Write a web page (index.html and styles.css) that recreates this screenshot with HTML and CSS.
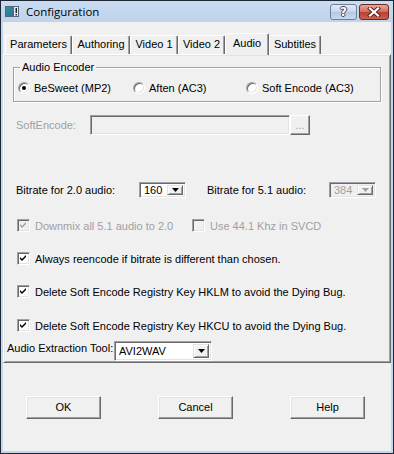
FILE: index.html
```html
<!DOCTYPE html>
<html>
<head>
  <meta charset="UTF-8">
  <title>Configuration</title>
  <link rel="stylesheet" href="styles.css">
</head>
<body>
<div class="window">
  <div class="titlebar">
    <svg class="app-icon" width="14" height="11" viewBox="0 0 14 11">
      <defs>
        <linearGradient id="ig" x1="0" y1="0" x2="1" y2="1">
          <stop offset="0" stop-color="#2f9a86"/>
          <stop offset="1" stop-color="#3565a8"/>
        </linearGradient>
      </defs>
      <rect x="0.5" y="0.5" width="13" height="10" fill="#e8eef5" stroke="#55657a"/>
      <rect x="1" y="1" width="8" height="9" fill="url(#ig)"/>
      <rect x="10.5" y="2" width="1.5" height="5" fill="#222"/>
      <rect x="10.5" y="8" width="1.5" height="1.5" fill="#222"/>
    </svg>
    <span class="title">Configuration</span>
    <div class="caption-btns">
      <span class="cap-btn cap-help">?</span>
      <span class="cap-btn cap-close">
        <svg width="14" height="10" viewBox="0 0 14 10">
          <path d="M3 1.5 L11 8.5 M11 1.5 L3 8.5" stroke="#5b1a12" stroke-width="4" stroke-linecap="square"/>
          <path d="M3 1.5 L11 8.5 M11 1.5 L3 8.5" stroke="#fff" stroke-width="2.2" stroke-linecap="square"/>
        </svg>
      </span>
    </div>
  </div>

  <div class="client">
    <div class="tabs">
      <div class="tab tab-params">Parameters</div>
      <div class="tab tab-author">Authoring</div>
      <div class="tab tab-video1">Video 1</div>
      <div class="tab tab-video2">Video 2</div>
      <div class="tab tab-audio selected">Audio</div>
      <div class="tab tab-subs">Subtitles</div>
    </div>

    <div class="panel">
      <div class="group">
        <span class="legend">Audio Encoder</span>
        <div class="radio-row">
          <label class="radio radio-1"><span class="radio-box on"></span>BeSweet (MP2)</label>
          <label class="radio radio-2"><span class="radio-box"></span>Aften (AC3)</label>
          <label class="radio"><span class="radio-box"></span>Soft Encode (AC3)</label>
        </div>
      </div>

      <div class="row row-soft">
        <span class="lbl lbl-soft disabled">SoftEncode:</span>
        <span class="textbox"></span>
        <span class="browse">...</span>
      </div>

      <div class="row row-bitrate">
        <span class="lbl lbl-br1">Bitrate for 2.0 audio:</span>
        <span class="combo combo-small"><span class="combo-text">160</span><span class="combo-arrow"><svg width="7" height="4" viewBox="0 0 7 4"><polygon points="0,0 7,0 3.5,4" fill="#000"/></svg></span></span>
        <span class="lbl lbl-br2">Bitrate for 5.1 audio:</span>
        <span class="combo combo-small combo-off"><span class="combo-text">384</span><span class="combo-arrow"><svg width="7" height="4" viewBox="0 0 7 4"><polygon points="0,0 7,0 3.5,4" fill="#a0a0a0"/></svg></span></span>
      </div>

      <div class="row check-row row-downmix">
        <label class="check check-first disabled"><span class="check-box off"><svg width="11" height="11" viewBox="0 0 11 11"><polygon points="2,4 4,6 8,2 8,4 4,8 2,6" fill="#a0a0a0"/></svg></span>Downmix all 5.1 audio to 2.0</label>
        <label class="check disabled"><span class="check-box off"></span>Use 44.1 Khz in SVCD</label>
      </div>

      <div class="row check-row row-always">
        <label class="check"><span class="check-box"><svg width="11" height="11" viewBox="0 0 11 11"><polygon points="2,4 4,6 8,2 8,4 4,8 2,6" fill="#000"/></svg></span>Always reencode if bitrate is different than chosen.</label>
      </div>

      <div class="row check-row row-hklm">
        <label class="check"><span class="check-box"><svg width="11" height="11" viewBox="0 0 11 11"><polygon points="2,4 4,6 8,2 8,4 4,8 2,6" fill="#000"/></svg></span>Delete Soft Encode Registry Key HKLM to avoid the Dying Bug.</label>
      </div>

      <div class="row check-row row-hkcu">
        <label class="check"><span class="check-box"><svg width="11" height="11" viewBox="0 0 11 11"><polygon points="2,4 4,6 8,2 8,4 4,8 2,6" fill="#000"/></svg></span>Delete Soft Encode Registry Key HKCU to avoid the Dying Bug.</label>
      </div>

      <div class="row row-tool">
        <span class="lbl lbl-tool">Audio Extraction Tool:</span>
        <span class="combo combo-tool"><span class="combo-text">AVI2WAV</span><span class="combo-arrow"><svg width="7" height="4" viewBox="0 0 7 4"><polygon points="0,0 7,0 3.5,4" fill="#000"/></svg></span></span>
      </div>
    </div>

    <div class="buttons">
      <span class="btn">OK</span>
      <span class="btn">Cancel</span>
      <span class="btn">Help</span>
    </div>
  </div>
</div>
</body>
</html>
```

FILE: styles.css
```css
body {
  margin: 0;
  font-family: "Liberation Sans", Arial, sans-serif;
  font-size: 11px;
  color: #000;
}
.window {
  width: 394px;
  height: 454px;
  box-sizing: border-box;
  border: 1px solid #1c2733;
  background: #c2d6ee;
  padding: 0 2px 2px 2px;
  display: flex;
  flex-direction: column;
}
/* title bar */
.titlebar {
  height: 21px;
  margin: 0 -2px;
  padding: 0 4px;
  display: flex;
  align-items: center;
  background: linear-gradient(#c9dcf2, #bed3ec);
}
.app-icon {
  margin-right: 7px;
}
.title {
  font-family: "Open Sans", "Liberation Sans", sans-serif;
  font-size: 11.5px;
  color: #000;
  flex: 1;
}
.caption-btns {
  display: flex;
  gap: 2px;
}
.cap-btn {
  height: 16px;
  box-sizing: border-box;
  border: 1px solid #6e7f97;
  border-radius: 3px;
  display: flex;
  align-items: center;
  justify-content: center;
}
.cap-help {
  width: 27px;
  background: linear-gradient(#e4ecf7, #c6d6eb 50%, #b3c7e2 51%, #c9d9ee);
  color: #fff;
  font-weight: bold;
  font-size: 12px;
  font-family: "DejaVu Sans", sans-serif;
  text-shadow: 1px 0 #3d4b5e, -1px 0 #3d4b5e, 0 1px #3d4b5e, 0 -1px #3d4b5e;
}
.cap-close {
  width: 30px;
  border-color: #6f2a20;
  background: linear-gradient(#e4a89c, #cf6a59 50%, #b8402f 51%, #c9604c);
}
/* client */
.client {
  flex: 1;
  background: #f0f0f0;
  padding-top: 11px;
}
.tabs {
  display: flex;
  align-items: flex-end;
  height: 21px;
  padding-left: 2px;
}
.tab {
  height: 19px;
  box-sizing: border-box;
  border: 1px solid #fff;
  border-right-color: #696969;
  border-bottom: none;
  border-radius: 2px 2px 0 0;
  box-shadow: inset -1px 0 #a0a0a0;
  background: #f0f0f0;
  text-align: center;
  line-height: 17px;
}
.tab.selected {
  height: 22px;
  margin-bottom: -1px;
  position: relative;
  z-index: 1;
  line-height: 19px;
}
.tab-params { width: 67px; }
.tab-author { width: 58px; }
.tab-video1 { width: 48px; }
.tab-video2 { width: 47px; }
.tab-audio { width: 44px; }
.tab-subs { width: 52px; }

.panel {
  height: 309px;
  box-sizing: border-box;
  border: 1px solid;
  border-color: #fff #696969 #696969 #fff;
  box-shadow: inset 1px 1px #e3e3e3, inset -1px -1px #a0a0a0;
}
/* group box */
.group {
  position: relative;
  margin: 12px 0 0 9px;
  width: 368px;
  height: 35px;
  box-sizing: border-box;
  border: 1px solid #a0a0a0;
  box-shadow: inset 1px 1px #fff, 1px 1px #fff;
}
.legend {
  position: absolute;
  top: -7px;
  left: 6px;
  padding: 0 2px;
  line-height: 13px;
  background: #f0f0f0;
}
.radio-row {
  display: flex;
  align-items: center;
  height: 12px;
  margin-top: 14px;
  padding-left: 4px;
}
.radio {
  display: flex;
  align-items: center;
}
.radio-1 { width: 115px; }
.radio-2 { width: 113px; }
.radio-box {
  width: 12px;
  height: 12px;
  box-sizing: border-box;
  border-radius: 50%;
  border: 1px solid;
  border-color: #a0a0a0 #fff #fff #a0a0a0;
  box-shadow: inset 1px 1px #696969, inset -1px -1px #e3e3e3;
  background: #fff;
  margin-right: 4px;
  display: flex;
  align-items: center;
  justify-content: center;
}
.radio-box.on::after {
  content: "";
  width: 4px;
  height: 4px;
  border-radius: 50%;
  background: #000;
}
/* rows */
.row {
  display: flex;
  align-items: center;
}
.disabled {
  color: #a0a0a0;
}
.row-soft {
  height: 20px;
  margin: 13px 0 0 12px;
}
.lbl-soft { width: 74px; }
.textbox {
  width: 200px;
  height: 20px;
  box-sizing: border-box;
  border: 1px solid;
  border-color: #a0a0a0 #fff #fff #a0a0a0;
  box-shadow: inset 1px 1px #696969, inset -1px -1px #e3e3e3;
  background: #f0f0f0;
}
.browse {
  width: 20px;
  height: 20px;
  box-sizing: border-box;
  border: 1px solid;
  border-color: #fff #696969 #696969 #fff;
  box-shadow: inset -1px -1px #a0a0a0;
  color: #a0a0a0;
  text-align: center;
  line-height: 18px;
}
.row-bitrate {
  height: 20px;
  margin: 45px 0 0 12px;
}
.lbl-br1 { width: 123px; }
.lbl-br2 { width: 122px; margin-left: 21px; }
.combo {
  display: flex;
  align-items: stretch;
  box-sizing: border-box;
  border: 1px solid;
  border-color: #a0a0a0 #fff #fff #a0a0a0;
  box-shadow: inset 1px 1px #696969, inset -1px -1px #e3e3e3;
  background: #fff;
  padding: 2px;
}
.combo-small {
  width: 47px;
  height: 16px;
}
.combo-text {
  flex: 1;
  padding-left: 2px;
  line-height: 11px;
  display: flex;
  align-items: center;
}
.combo-off {
  background: #f0f0f0;
  color: #a0a0a0;
}
.combo-arrow {
  width: 16px;
  box-sizing: border-box;
  border: 1px solid;
  border-color: #e3e3e3 #696969 #696969 #e3e3e3;
  box-shadow: inset 1px 1px #fff, inset -1px -1px #a0a0a0;
  background: #f0f0f0;
  display: flex;
  align-items: center;
  justify-content: center;
}
.check-row {
  height: 13px;
  margin-left: 13px;
}
.row-downmix { margin-top: 19px; }
.row-always { margin-top: 20px; }
.row-hklm { margin-top: 20px; }
.row-hkcu { margin-top: 21px; }
.check {
  display: flex;
  align-items: center;
}
.check-first { width: 175px; }
.check-box {
  width: 13px;
  height: 13px;
  box-sizing: border-box;
  border: 1px solid;
  border-color: #a0a0a0 #fff #fff #a0a0a0;
  box-shadow: inset 1px 1px #696969, inset -1px -1px #e3e3e3;
  background: #fff;
  margin-right: 5px;
  display: flex;
}
.check-box svg {
  display: block;
}
.check-box.off {
  background: #f0f0f0;
}
.row-tool {
  height: 20px;
  margin: 9px 0 0 3px;
  align-items: flex-start;
}
.lbl-tool {
  width: 107px;
  line-height: 14px;
}
.combo-tool {
  width: 98px;
  height: 20px;
}
/* dialog buttons */
.buttons {
  display: flex;
  gap: 57px;
  margin-top: 33px;
  padding-left: 23px;
}
.btn {
  width: 75px;
  height: 23px;
  box-sizing: border-box;
  border: 1px solid;
  border-color: #fff #696969 #696969 #fff;
  box-shadow: inset -1px -1px #a0a0a0, inset 1px 1px #e3e3e3;
  text-align: center;
  line-height: 21px;
}
```
